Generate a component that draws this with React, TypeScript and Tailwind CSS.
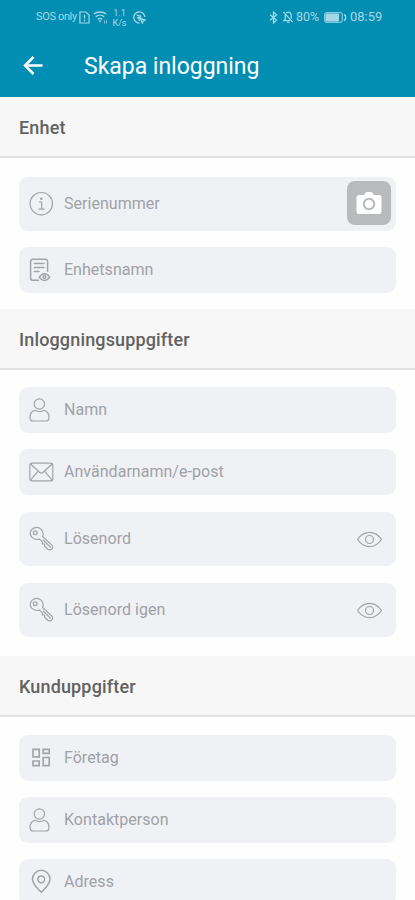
import type { ReactNode } from "react";

function Icon({ children }: { children: ReactNode }) {
  return (
    <svg
      viewBox="0 0 26 26"
      className="h-[26px] w-[26px] shrink-0 text-[#a2a4a8]"
      fill="none"
      stroke="currentColor"
      strokeWidth="1.2"
      strokeLinecap="round"
      strokeLinejoin="round"
    >
      {children}
    </svg>
  );
}

const InfoIcon = () => (
  <Icon>
    <circle cx="13.3" cy="12.7" r="11.2" />
    <path d="M11.3 11h2.4v7M11 18.2h5" />
    <circle cx="13.3" cy="7.7" r=".7" fill="currentColor" />
  </Icon>
);

const DocumentIcon = () => (
  <Icon>
    <g strokeWidth="1.5">
      <path d="M10.5 23.3H5a2.4 2.4 0 0 1-2.4-2.4V4.6A2.4 2.4 0 0 1 5 2.2h12.2a2.4 2.4 0 0 1 2.4 2.4v9.7M6.5 6.6h9.5M6.5 10.6h9.5M6.5 14.6h4.5" />
      <path d="M11.3 20.2c2.8-4.6 7.6-4.6 10.4 0-2.8 4.3-7.6 4.3-10.4 0Z" />
      <circle cx="16.5" cy="20" r="1.3" />
    </g>
  </Icon>
);

const PersonIcon = () => (
  <Icon>
    <circle cx="11.4" cy="7" r="5.2" />
    <path d="M7 13.3C3.8 14.1 2 16.7 2 20.4c0 2.2 1.1 3.6 3.4 3.6h12.2c2.3 0 3.4-1.4 3.4-3.6 0-3.7-1.8-6.3-5-7.1-2.8 1.6-6.2 1.6-9 0Z" />
  </Icon>
);

const MailIcon = () => (
  <Icon>
    <rect x="1.8" y="4.2" width="23" height="17.7" rx="2" />
    <path d="m2.5 5 9 8.3c1.1 1 2.5 1 3.6 0l9-8.3M2.5 21.1l7.6-9M24.1 21.1l-7.6-9" />
  </Icon>
);

const KeyIcon = () => (
  <Icon>
    <path d="M4 3.3C6.6.7 10.7.7 13.3 3.3c1.9 2 2.3 4.6 1.3 7.2l9 8.4c1.2 1.1 1.3 2.6.4 3.8-1 1.3-2.8 1.5-4.2.5l-3.3-3.2v-2l-2.1-.1-.1-2.1-2.7-2.7c-2.7.8-5.5.2-7.500-1.700C1.5 8.9 1.5 5.8 4 3.3Z" />
    <circle cx="7.2" cy="6.7" r="1.9" />
    <path d="m15.3 14.3 7 6.7" />
  </Icon>
);

const CompanyIcon = () => (
  <Icon>
    <g strokeWidth="1.7" strokeLinejoin="miter">
      <path d="M5 4.3h6.2v7.5H5zM15.2 4.3h6v4.1h-6zM15.2 12.5h6v8.1h-6zM5 16h6.2v4.6H5z" />
    </g>
  </Icon>
);

const PinIcon = () => (
  <Icon>
    <path
      strokeWidth="1.5"
      d="M22 10.1c0 5.7-6.1 10.6-8.7 13.2C10.6 20.7 4.5 15.8 4.5 10.1a8.75 8.75 0 0 1 17.5 0Z"
    />
    <circle cx="13.2" cy="10.3" r="3.4" strokeWidth="1.5" />
  </Icon>
);

const EyeIcon = () => (
  <Icon>
    <path d="M1.5 13.5C8 4 19 4 25.5 13.5 19 23 8 23 1.5 13.5Z" />
    <circle cx="13.5" cy="13.5" r="4" />
  </Icon>
);

function Field({
  icon,
  label,
  tall = false,
  children,
}: {
  icon: ReactNode;
  label: string;
  tall?: boolean;
  children?: ReactNode;
}) {
  return (
    <div
      className={`flex shrink-0 items-center rounded-[9px] bg-[#eff1f5] pl-[9px] ${tall ? "h-[54px]" : "h-[46px]"}`}
    >
      {icon}
      <span className="ml-[10px] flex-1 pb-px text-[16px] leading-5 tracking-[0.03px] text-[#a0a2a6]">
        {label}
      </span>
      {children}
    </div>
  );
}

function SectionTitle({ children }: { children: ReactNode }) {
  return (
    <h2 className="flex h-[61px] shrink-0 items-center border-b-2 border-[#e1e1e2] bg-[#f7f7f7] pt-0.5 pl-[19px] text-[18px] font-medium tracking-[0.15px] text-[#626262]">
      {children}
    </h2>
  );
}

function StatusBar() {
  return (
    <div className="flex h-[34px] items-center pr-[31px] pl-9 text-[#a5d8e7]">
      <span className="w-[42px] text-[11px] tracking-[-0.35px] whitespace-nowrap">SOS only</span>
      <svg viewBox="0 0 12 14" className="ml-px h-[13px] w-[11px]" fill="none" stroke="currentColor" strokeWidth="1.3">
        <path d="M1 1h6.5L11 4.3V13H1zM6 4v4M6 9.5V11" />
      </svg>
      <svg viewBox="0 0 15 13" className="ml-[3px] h-[13px] w-[15px]" fill="none" stroke="currentColor" strokeWidth="1.4">
        <path d="M.8 3c3.7-2.7 9-2.7 12.4 0M2.8 5.7c2.4-2.1 6-2.1 8.4 0M4.8 8.3c1.5-1.2 3-1.2 4.5 0" />
        <path d="m5.4 9.5 1.6 2 1.6-2Z" fill="currentColor" stroke="none" />
        <path d="M11.5 12.5v-3M13.5 9.5v3" strokeWidth=".8" />
      </svg>
      <div className="ml-1 flex w-[15px] flex-col items-center pt-px text-[9px] leading-[10px]">
        <span>1.1</span>
        <span>K/s</span>
      </div>
      <svg viewBox="0 0 14 14" className="ml-1.5 h-[13px] w-[13px]" fill="none" stroke="currentColor" strokeWidth="1.4">
        <path d="M12.8 6.5A6 6 0 1 0 7 13M4 4.5l4.5 1M4.3 7.5 9 6M6 7l1 3.5M8 8l5 1.8-2.2.9L10 13Z" />
      </svg>
      <div className="flex-1" />
      <svg viewBox="0 0 9 13" className="h-[13px] w-[9px]" fill="none" stroke="currentColor" strokeWidth="1.3">
        <path d="m1 3.8 6.5 5.3L4.5 12V1l3 2.9L1 9.2" />
      </svg>
      <svg viewBox="0 0 12 13" className="ml-1 h-3 w-3" fill="none" stroke="currentColor" strokeWidth="1.4">
        <path d="M1 1l10 11M3 4v5L1.5 10.5H8M4 2c3-2 5.5 0 5.5 3v3M5 12h2.5" />
      </svg>
      <span className="ml-0.5 w-[26px] text-[12.5px]">80%</span>
      <svg viewBox="0 0 23 11" className="ml-0.5 h-[11px] w-[23px]" fill="none" stroke="currentColor">
        <rect x=".7" y=".7" width="17.5" height="9.6" rx="1.5" />
        <path d="M2 2h12.5v7H2z" fill="currentColor" />
        <path d="M20 2.5c2.3.9 2.3 5.1 0 6" strokeWidth="1.4" />
      </svg>
      <span className="ml-[3px] w-[34px] text-[13px] whitespace-nowrap">08:59</span>
    </div>
  );
}

export default function App() {
  return (
    <main className="flex h-[900px] w-full flex-col overflow-hidden bg-[#fefefe] font-['Roboto','Noto_Sans',sans-serif]">
      <header className="h-[97px] shrink-0 bg-[#028db3]">
        <StatusBar />
        <div className="flex h-[63px] items-center pl-[23px] text-white">
          <svg viewBox="0 0 20 20" className="h-5 w-5" fill="none" stroke="currentColor" strokeWidth="2.5">
            <path d="M19.5 9.5H2.5M10.5 1 2 9.5 10.5 18" />
          </svg>
          <h1 className="ml-[41px] pt-[3px] text-[23px] tracking-[-0.02px] whitespace-nowrap">Skapa inloggning</h1>
        </div>
      </header>

      <SectionTitle>Enhet</SectionTitle>
      <section className="flex h-[151px] shrink-0 flex-col gap-4 px-[19px] pt-[19px]">
        <Field icon={<InfoIcon />} label="Serienummer" tall>
          <button className="mr-[5px] mb-0.5 flex h-11 w-11 items-center justify-center rounded-lg bg-[#b9babb]">
            <svg viewBox="0 0 26 24" className="h-6 w-[26px]">
              <path
                d="M3 4h5l1.5-2.3Q10 1 11 1h4q1 0 1.5.7L18 4h5q2.5 0 2.5 2.5V20.5Q25.5 23 23 23H3Q.5 23 .5 20.5V6.5Q.5 4 3 4Z"
                fill="white"
              />
              <circle cx="13" cy="13" r="5.2" fill="none" stroke="#b9babb" strokeWidth="2" />
            </svg>
          </button>
        </Field>
        <Field icon={<DocumentIcon />} label="Enhetsnamn" />
      </section>

      <SectionTitle>Inloggningsuppgifter</SectionTitle>
      <section className="flex h-[286px] shrink-0 flex-col gap-[17px] px-[19px] pt-[17px]">
        <div className="flex flex-col gap-4">
          <Field icon={<PersonIcon />} label="Namn" />
          <Field icon={<MailIcon />} label="Användarnamn/e-post" />
        </div>
        <Field icon={<KeyIcon />} label="Lösenord" tall>
          <div className="mr-[14px]">
            <EyeIcon />
          </div>
        </Field>
        <Field icon={<KeyIcon />} label="Lösenord igen" tall>
          <div className="mr-[14px]">
            <EyeIcon />
          </div>
        </Field>
      </section>

      <SectionTitle>Kunduppgifter</SectionTitle>
      <section className="flex shrink-0 flex-col gap-4 px-[19px] pt-[18px]">
        <Field icon={<CompanyIcon />} label="Företag" />
        <Field icon={<PersonIcon />} label="Kontaktperson" />
        <Field icon={<PinIcon />} label="Adress" />
      </section>
    </main>
  );
}
